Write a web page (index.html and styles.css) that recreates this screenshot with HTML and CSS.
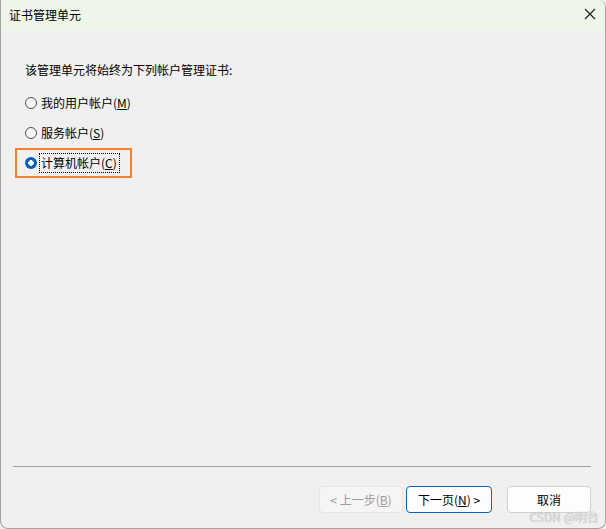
FILE: index.html
```html
<!DOCTYPE html>
<html lang="zh-CN">
<head>
    <meta charset="UTF-8">
    <title>证书管理单元</title>
    <link rel="stylesheet" href="styles.css">
</head>
<body>
    <div class="window">
        <div class="titlebar">
            <span class="title">证书管理单元</span>
            <span class="close">
                <svg width="12" height="12" viewBox="0 0 12 12"><path d="M1 1 L11 11 M11 1 L1 11" stroke="#1a1a1a" stroke-width="1.1" fill="none"/></svg>
            </span>
        </div>
        <div class="content">
            <p class="intro">该管理单元将始终为下列帐户管理证书:</p>
            <div class="options">
                <label class="option"><span class="radio"></span><span class="text">我的用户帐户(<u>M</u>)</span></label>
                <label class="option"><span class="radio"></span><span class="text">服务帐户(<u>S</u>)</span></label>
                <label class="option marked"><span class="radio checked"></span><span class="text focus">计算机帐户(<u>C</u>)</span></label>
            </div>
        </div>
        <div class="footer">
            <div class="separator"></div>
            <div class="buttons">
                <button class="btn prev" disabled>&lt; 上一步(<u>B</u>)</button>
                <button class="btn next">下一页(<u>N</u>) &gt;</button>
                <button class="btn cancel">取消</button>
            </div>
        </div>
        <div class="watermark">CSDN @明台</div>
    </div>
</body>
</html>
```

FILE: styles.css
```css
/* 基础 */
* {
    margin: 0;
    padding: 0;
    box-sizing: border-box;
}
body {
    width: 606px;
    height: 529px;
    font: 12px/16px "Noto Sans CJK SC", "Liberation Sans", sans-serif;
    color: #000;
    background: #f0f0f0;
    overflow: hidden;
}

/* 窗口 */
.window {
    position: relative;
    width: 606px;
    height: 529px;
    display: flex;
    flex-direction: column;
    background: #f0f0f0;
    border: 1px solid #a3a3a3;
    border-top: 0;
    border-radius: 0 8px 8px 8px;
    overflow: hidden;
}
.titlebar {
    height: 30px;
    flex: none;
    display: flex;
    align-items: center;
    justify-content: space-between;
    padding: 0 8px 0 8px;
    background: #eef5e9;
}
.title {
    font-size: 12px;
    line-height: 16px;
}
.close {
    display: flex;
    margin-top: -2px;
    margin-right: 1px;
}

/* 内容 */
.content {
    flex: 1;
    padding: 32px 0 0 24px;
}
.intro {
    margin-bottom: 10px;
}
.options {
    display: flex;
    flex-direction: column;
}
.option {
    height: 30px;
    display: flex;
    align-items: center;
    gap: 4px;
    width: fit-content;
}
.radio {
    width: 12px;
    height: 12px;
    border-radius: 50%;
    border: 1px solid #4f4f4f;
    background: #f7f7f7;
    flex: none;
}
.radio.checked {
    border: 0;
    background: radial-gradient(circle, #fff 0, #fff 2.6px, #005fb8 3px);
}
.text u {
    text-decoration: underline;
    text-underline-offset: 1px;
}
/* 橙色标注框 */
.option.marked {
    margin-left: -10px;
    padding: 0 12px 0 8px;
    border: 2px solid #f5822a;
}
.focus {
    outline: 1px dotted #000;
    outline-offset: 1px;
    padding: 0 1px 0 0;
}

/* 底部 */
.footer {
    flex: none;
    padding: 0 14px 15px 12px;
}
.separator {
    height: 1px;
    background: #a0a0a0;
    margin-bottom: 19px;
}
.buttons {
    display: flex;
    justify-content: flex-end;
}
.btn {
    height: 27px;
    width: 84px;
    font: 12px/16px "Noto Sans CJK SC", "Liberation Sans", sans-serif;
    color: #000;
    background: #fdfdfd;
    border: 1px solid #d0d0d0;
    border-radius: 4px;
}
.btn u {
    text-underline-offset: 1px;
}
.btn.prev {
    color: #9d9d9d;
    background: #f5f5f5;
    border-color: #e6e6e6;
}
.btn.next {
    width: 86px;
    margin-left: 3px;
    border-color: #0067c0;
}
.btn.cancel {
    margin-left: 15px;
}

/* 水印 */
.watermark {
    position: absolute;
    right: 6px;
    bottom: 4px;
    font-size: 12px;
    line-height: 14px;
    color: rgba(225, 225, 225, 0.95);
    text-shadow: 0 0 1px rgba(110, 110, 110, 0.6);
}
```
